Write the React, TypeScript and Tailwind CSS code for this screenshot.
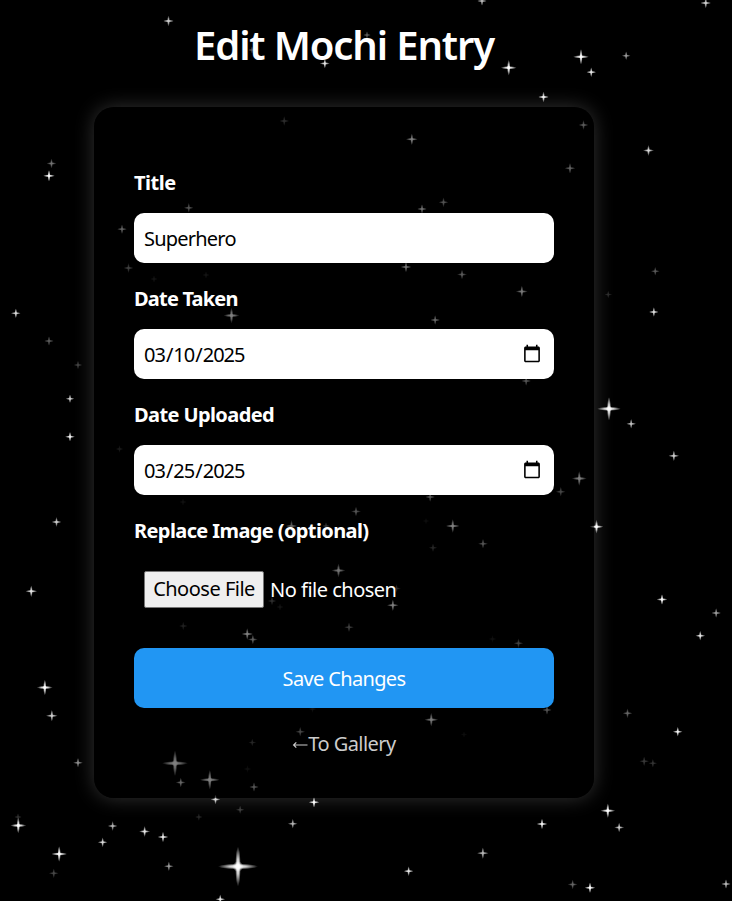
import React from "react";

// Each star: centre x, centre y, ray length, brightness.
const stars: [number, number, number, number][] = [
  [168.5, 21, 5.5, 0.8], [324.8, 63.5, 5, 0.9], [49, 175.8, 6, 1], [51.5, 163.5, 5, 0.45],
  [252, 50, 4, 0.3], [367, 35, 4, 0.35],
  [284.3, 121, 5, 0.35], [188.7, 207.8, 5, 0.65], [482, 1, 5, 0.7], [705.7, 3, 5.5, 0.8],
  [508.7, 67.7, 8, 1], [581, 56.8, 8, 1], [591.3, 72.2, 5, 0.9], [626.2, 55.7, 4.5, 0.6],
  [543.5, 97, 5.5, 0.95], [411.8, 139.3, 6, 1], [583.5, 125, 5, 0.7], [570, 168.3, 5.5, 0.75],
  [648.5, 150.5, 5.5, 0.85], [443.5, 202.3, 5, 0.65], [422, 209, 5, 0.85],
  [122, 229.2, 5, 0.75], [128.5, 268, 5, 0.5], [154, 279, 4, 0.15], [206, 275, 4, 0.15],
  [231.5, 315.5, 8, 1], [15.8, 313.3, 5, 0.85], [49, 341, 5, 0.35], [78, 365, 4.5, 0.25],
  [70, 398.7, 4.5, 0.8], [70, 436.7, 5, 0.95], [119.5, 449, 4, 0.2],
  [406, 267, 5.5, 0.9], [462, 274.5, 5, 0.7], [521.8, 291.5, 6, 0.95], [435.2, 320, 5, 0.8],
  [655.3, 271.3, 4.5, 0.35], [608.3, 294.5, 4, 0.17], [653.8, 312, 5, 0.85],
  [526.2, 381, 5, 0.65], [609, 408.8, 12, 1], [631.2, 423.8, 5, 0.75],
  [56.5, 522, 5, 0.8], [31.3, 591.3, 6, 0.9], [183, 502, 4, 0.12], [291.5, 526, 6, 0.75],
  [356, 511.5, 5, 0.65], [326, 526, 4, 0.4], [338.5, 570.5, 7, 0.9], [272, 601, 4.5, 0.35],
  [280, 607, 4, 0.15], [183.3, 626, 4.5, 0.25], [247.3, 634, 6, 1], [252.8, 639.5, 5, 0.75],
  [349, 627.3, 5, 0.5], [673.8, 455.8, 5.5, 0.8], [579.3, 478.5, 7.5, 1], [560.7, 491.7, 5, 0.55],
  [430.2, 497, 5, 0.65], [452.7, 526, 7, 1], [483, 543.7, 5, 0.65], [433, 547.7, 4.5, 0.3],
  [426, 521, 3.5, 0.1], [596.5, 526.7, 7, 1], [392.8, 605.3, 6, 1], [396.5, 588.5, 4.5, 0.35],
  [662, 599.5, 5.5, 1], [716.2, 613, 5, 0.6], [700.3, 635.7, 5, 0.9], [518.5, 643.3, 5, 0.5],
  [492.5, 639, 4, 0.12], [44.8, 687.5, 8, 1], [51.8, 715.7, 6, 0.8], [78, 762.7, 5, 0.55],
  [175, 763.3, 13, 1], [209.8, 779.8, 10, 1], [180.7, 782.5, 5, 0.8], [254, 787, 5, 0.65],
  [252.3, 742.5, 4, 0.3], [300.3, 731.7, 5, 0.55], [247.5, 769, 4, 0.12], [312.5, 709, 4, 0.15],
  [215.5, 799.5, 5, 0.85], [240.2, 809.7, 4.5, 0.23], [198.8, 817, 4, 0.15], [314, 802.3, 5.5, 1],
  [18.3, 825.5, 8, 1], [18, 817, 4, 0.18], [59.2, 854, 8, 1], [53.7, 873.3, 5, 0.28],
  [112.6, 826, 5, 0.7], [102.6, 842.3, 5, 0.85], [144.6, 831.5, 5.5, 0.9], [163, 837, 5.5, 0.9],
  [168.8, 866.3, 5, 0.6], [292.7, 823.7, 5, 0.7], [238, 866.5, 20, 1], [220.3, 899.3, 5, 0.9],
  [431.3, 719.7, 7, 0.95], [547, 710, 5, 0.65], [464, 734.5, 3.5, 0.1], [627.5, 713.3, 5, 0.4],
  [677.7, 731.7, 5, 0.95], [644.2, 761.3, 5, 0.22], [652.8, 763.3, 4.5, 0.2], [607.8, 810.7, 7.5, 1],
  [619.2, 827.5, 5, 0.8], [542, 824, 5.5, 0.95], [482.8, 853.2, 6, 0.7], [408.6, 871.2, 5, 0.9],
  [572.6, 884.5, 5, 0.4], [590, 887.7, 5.5, 1], [726, 884, 5, 0.7],
];

function StarField() {
  return (
    <svg className="pointer-events-none absolute inset-0" width="732" height="901" viewBox="0 0 732 901" aria-hidden="true">
      <defs>
        <radialGradient id="ray">
          <stop offset="0" stopColor="#fff" />
          <stop offset="0.4" stopColor="#fff" stopOpacity="0.8" />
          <stop offset="1" stopColor="#fff" stopOpacity="0" />
        </radialGradient>
      </defs>
      {stars.map(([x, y, r, o], i) => {
        const w = 0.9 + r * 0.1;
        return (
          <g key={i} fill="url(#ray)" opacity={o}>
            <ellipse cx={x} cy={y} rx={r} ry={w} />
            <ellipse cx={x} cy={y} rx={w} ry={r} />
            <circle cx={x} cy={y} r={r * 0.27} />
          </g>
        );
      })}
    </svg>
  );
}

const inputClass =
  "block h-[50px] w-full rounded-[10px] bg-white text-[20px] leading-[27px] text-black outline-none";

function Field({ label, id, labelClass, children }: { label: string; id: string; labelClass: string; children: React.ReactNode }) {
  return (
    <div className="h-[116px]">
      <label htmlFor={id} className="flex h-[46px] items-start pt-[2px] leading-[27px]">
        <span className={"text-[20px] font-bold whitespace-nowrap text-white " + labelClass}>{label}</span>
      </label>
      {children}
    </div>
  );
}

export default function App() {
  return (
    <div className="relative h-[901px] w-[732px] overflow-hidden bg-black font-['Noto_Sans',sans-serif] text-white">
      <StarField />
      <main className="relative flex w-[688px] flex-col items-center">
        <h1 className="mt-[18px] h-[54px] text-[40px] leading-[54px] font-semibold tracking-[-1.12px] whitespace-nowrap">Edit Mochi Entry</h1>
        <form
          className="mt-[35px] h-[691px] w-[500px] rounded-[20px] bg-black/50 px-10 pt-[60px] shadow-[0_0_20px_rgba(255,255,255,0.2)]"
          onSubmit={(e) => e.preventDefault()}
        >
          <Field label="Title" id="title" labelClass="tracking-[-0.5px]">
            <input id="title" type="text" defaultValue="Superhero" className={inputClass + " px-[10px] tracking-[-0.78px]"} />
          </Field>
          <Field label="Date Taken" id="taken" labelClass="tracking-[-0.8px]">
            <input id="taken" type="date" defaultValue="2025-03-10" className={inputClass + " pr-[10px] pl-[9px] tracking-[-1px]"} />
          </Field>
          <Field label="Date Uploaded" id="uploaded" labelClass="tracking-[-0.6px]">
            <input id="uploaded" type="date" defaultValue="2025-03-25" className={inputClass + " pr-[10px] pl-[9px] tracking-[-1px]"} />
          </Field>
          <Field label="Replace Image (optional)" id="image" labelClass="tracking-[-0.6px]">
            <div className="flex h-[56px] items-center gap-[6px] pt-px pl-[10px] text-[20px]">
              <button
                id="image"
                type="button"
                className="h-[37px] w-[120px] rounded-[2px] border border-[#767676] bg-[#efefef] pb-[2px] leading-[33px] tracking-[-0.5px] whitespace-nowrap text-black"
              >
                Choose File
              </button>
              <span className="tracking-[-0.5px] whitespace-nowrap">No file chosen</span>
            </div>
          </Field>
          <button type="submit" className="mt-[17px] block h-[60px] w-full rounded-[10px] bg-[#2196f3] text-[20px] leading-[27px] tracking-[-0.65px]">
            Save Changes
          </button>
          <a href="#" className="mt-[22px] flex h-[27px] items-center justify-center text-[20px] leading-[27px] whitespace-nowrap text-[#ccc]">
            <svg width="16" height="10" viewBox="0 0 16 10" className="mt-[3px]" fill="none" stroke="currentColor" strokeWidth="1.2">
              <path d="M15.5 5H2M4.3 2.3 1.6 5l2.7 2.7" />
            </svg>
            <span className="tracking-[-0.55px]">To Gallery</span>
          </a>
        </form>
      </main>
    </div>
  );
}
